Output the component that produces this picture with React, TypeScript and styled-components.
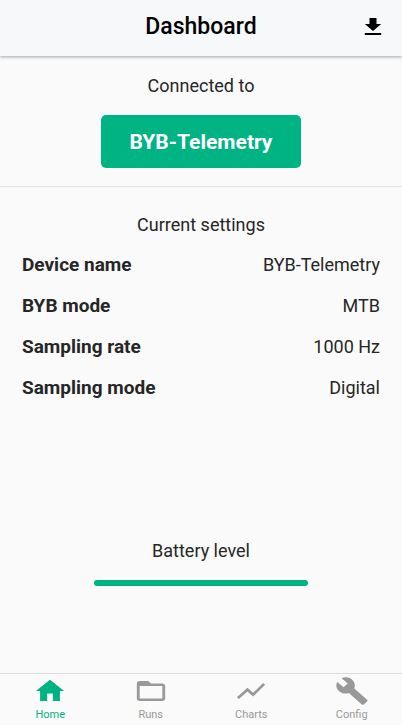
import type { ReactNode } from "react";
import styled, { createGlobalStyle } from "styled-components";

const green = "#00b383";

const GlobalStyle = createGlobalStyle`
  *, *::before, *::after { box-sizing: border-box; }
  html, body, #root { height: 100%; }
  body {
    margin: 0;
    background: #fafafa;
    color: #262626;
    font-family: Roboto, "Liberation Sans", sans-serif;
    font-size: 18px;
    line-height: 20px;
  }
`;

const Screen = styled.div`
  display: flex;
  flex-direction: column;
  min-height: 100%;
`;

const Header = styled.header`
  display: grid;
  grid-template-columns: 1fr auto 1fr;
  align-items: center;
  height: 56px;
  padding: 0 15px 2px;
  background: #f7f8fa;
  box-shadow: 0 1px 3px rgba(0, 0, 0, 0.35);
`;

const Title = styled.h1`
  grid-column: 2;
  margin: 0;
  color: #000;
  font-size: 23px;
  font-weight: 500;
  line-height: 28px;
`;

const IconButton = styled.button`
  display: flex;
  justify-self: end;
  padding: 0;
  border: 0;
  background: none;
  color: #000;
  cursor: pointer;
`;

const Main = styled.main`
  display: flex;
  flex: 1;
  flex-direction: column;
`;

const Connection = styled.section`
  display: flex;
  flex-direction: column;
  align-items: center;
  gap: 19px;
  padding: 20px 24px 18px;
  border-bottom: 1px solid #e2e2e2;
`;

const SectionTitle = styled.h2`
  margin: 0;
  font-size: 18px;
  font-weight: 400;
  line-height: 20px;
  text-align: center;
`;

const DeviceButton = styled.button`
  padding: 14px 29px 13px;
  border: 0;
  border-radius: 5px;
  background: ${green};
  color: #fff;
  font-family: inherit;
  font-size: 21px;
  font-weight: 700;
  line-height: 26px;
  cursor: pointer;
`;

const Settings = styled.section`
  padding: 28px 22px 0;
`;

const SettingList = styled.dl`
  display: flex;
  flex-direction: column;
  gap: 21px;
  margin: 20px 0 0;
`;

const SettingRow = styled.div`
  display: flex;
  justify-content: space-between;
`;

const SettingLabel = styled.dt`
  font-size: 19px;
  font-weight: 700;
`;

const SettingValue = styled.dd`
  margin: 0;
`;

const Battery = styled.section`
  display: flex;
  flex-direction: column;
  align-items: center;
  gap: 19px;
  margin-top: auto;
  padding-bottom: 87px;
`;

const Meter = styled.div`
  width: 53%;
  height: 6px;
  overflow: hidden;
  border-radius: 3px;
  background: #d5efe7;
`;

const MeterFill = styled.div`
  height: 100%;
  background: ${green};
`;

const TabBar = styled.nav`
  display: grid;
  grid-template-columns: repeat(4, 1fr);
  height: 54px;
  border-top: 1px solid #dcdcdc;
  border-bottom: 2px solid #fff;
`;

const Tab = styled.a<{ $active?: boolean }>`
  display: flex;
  flex-direction: column;
  align-items: center;
  gap: 2px;
  padding-top: 2px;
  color: ${(p) => (p.$active ? green : "#999")};
  font-size: 11px;
  line-height: 14px;
  text-decoration: none;
`;

const TabIcon = styled.svg`
  display: block;
  width: 34px;
  height: 30px;
  fill: currentColor;
`;

const tabs: { label: string; icon: ReactNode }[] = [
  { label: "Home", icon: <path d="M10 20v-6h4v6h5v-8h3L12 3 2 12h3v8z" /> },
  {
    label: "Runs",
    icon: (
      <path d="M20 6h-8l-2-2H4c-1.100 0-1.990.900-1.990 2L2 18c0 1.100.900 2 2 2h16c1.100 0 2-.900 2-2V8c0-1.100-.900-2-2-2zm0 12H4V8h16v10z" />
    ),
  },
  { label: "Charts", icon: <path d="M3.500 18.490l6-6.010 4 4L22 6.920l-1.410-1.410-7.090 7.970-4-4L2 16.990z" /> },
  {
    label: "Config",
    icon: (
      <path d="M22.700 19l-9.100-9.100c.900-2.300.400-5-1.500-6.900-2-2-5-2.400-7.400-1.300L9 6 6 9 1.600 4.700C.400 7.100.900 10.100 2.900 12.100c1.900 1.900 4.600 2.400 6.900 1.500l9.100 9.100c.400.400 1 .400 1.400 0l2.300-2.300c.500-.400.500-1.100.100-1.400z" />
    ),
  },
];

const settings = [
  { label: "Device name", value: "BYB-Telemetry" },
  { label: "BYB mode", value: "MTB" },
  { label: "Sampling rate", value: "1000 Hz" },
  { label: "Sampling mode", value: "Digital" },
];

const batteryLevel = 100;

export default function App() {
  return (
    <Screen>
      <GlobalStyle />
      <Header>
        <Title>Dashboard</Title>
        <IconButton type="button" aria-label="Download">
          <svg width="28" height="24" viewBox="0 0 24 24" preserveAspectRatio="none" fill="currentColor">
            <path d="M19 9h-4V3H9v6H5l7 7 7-7zM5 18v2h14v-2H5z" />
          </svg>
        </IconButton>
      </Header>
      <Main>
        <Connection>
          <SectionTitle>Connected to</SectionTitle>
          <DeviceButton type="button">BYB-Telemetry</DeviceButton>
        </Connection>
        <Settings>
          <SectionTitle>Current settings</SectionTitle>
          <SettingList>
            {settings.map((s) => (
              <SettingRow key={s.label}>
                <SettingLabel>{s.label}</SettingLabel>
                <SettingValue>{s.value}</SettingValue>
              </SettingRow>
            ))}
          </SettingList>
        </Settings>
        <Battery>
          <SectionTitle id="battery-title">Battery level</SectionTitle>
          <Meter
            role="meter"
            aria-labelledby="battery-title"
            aria-valuemin={0}
            aria-valuemax={100}
            aria-valuenow={batteryLevel}
          >
            <MeterFill style={{ width: `${batteryLevel}%` }} />
          </Meter>
        </Battery>
      </Main>
      <TabBar>
        {tabs.map((t, i) => (
          <Tab key={t.label} href={`#${t.label.toLowerCase()}`} $active={i === 0} aria-current={i === 0 ? "page" : undefined}>
            <TabIcon viewBox="0 0 24 24" preserveAspectRatio="none" aria-hidden="true">
              {t.icon}
            </TabIcon>
            {t.label}
          </Tab>
        ))}
      </TabBar>
    </Screen>
  );
}
